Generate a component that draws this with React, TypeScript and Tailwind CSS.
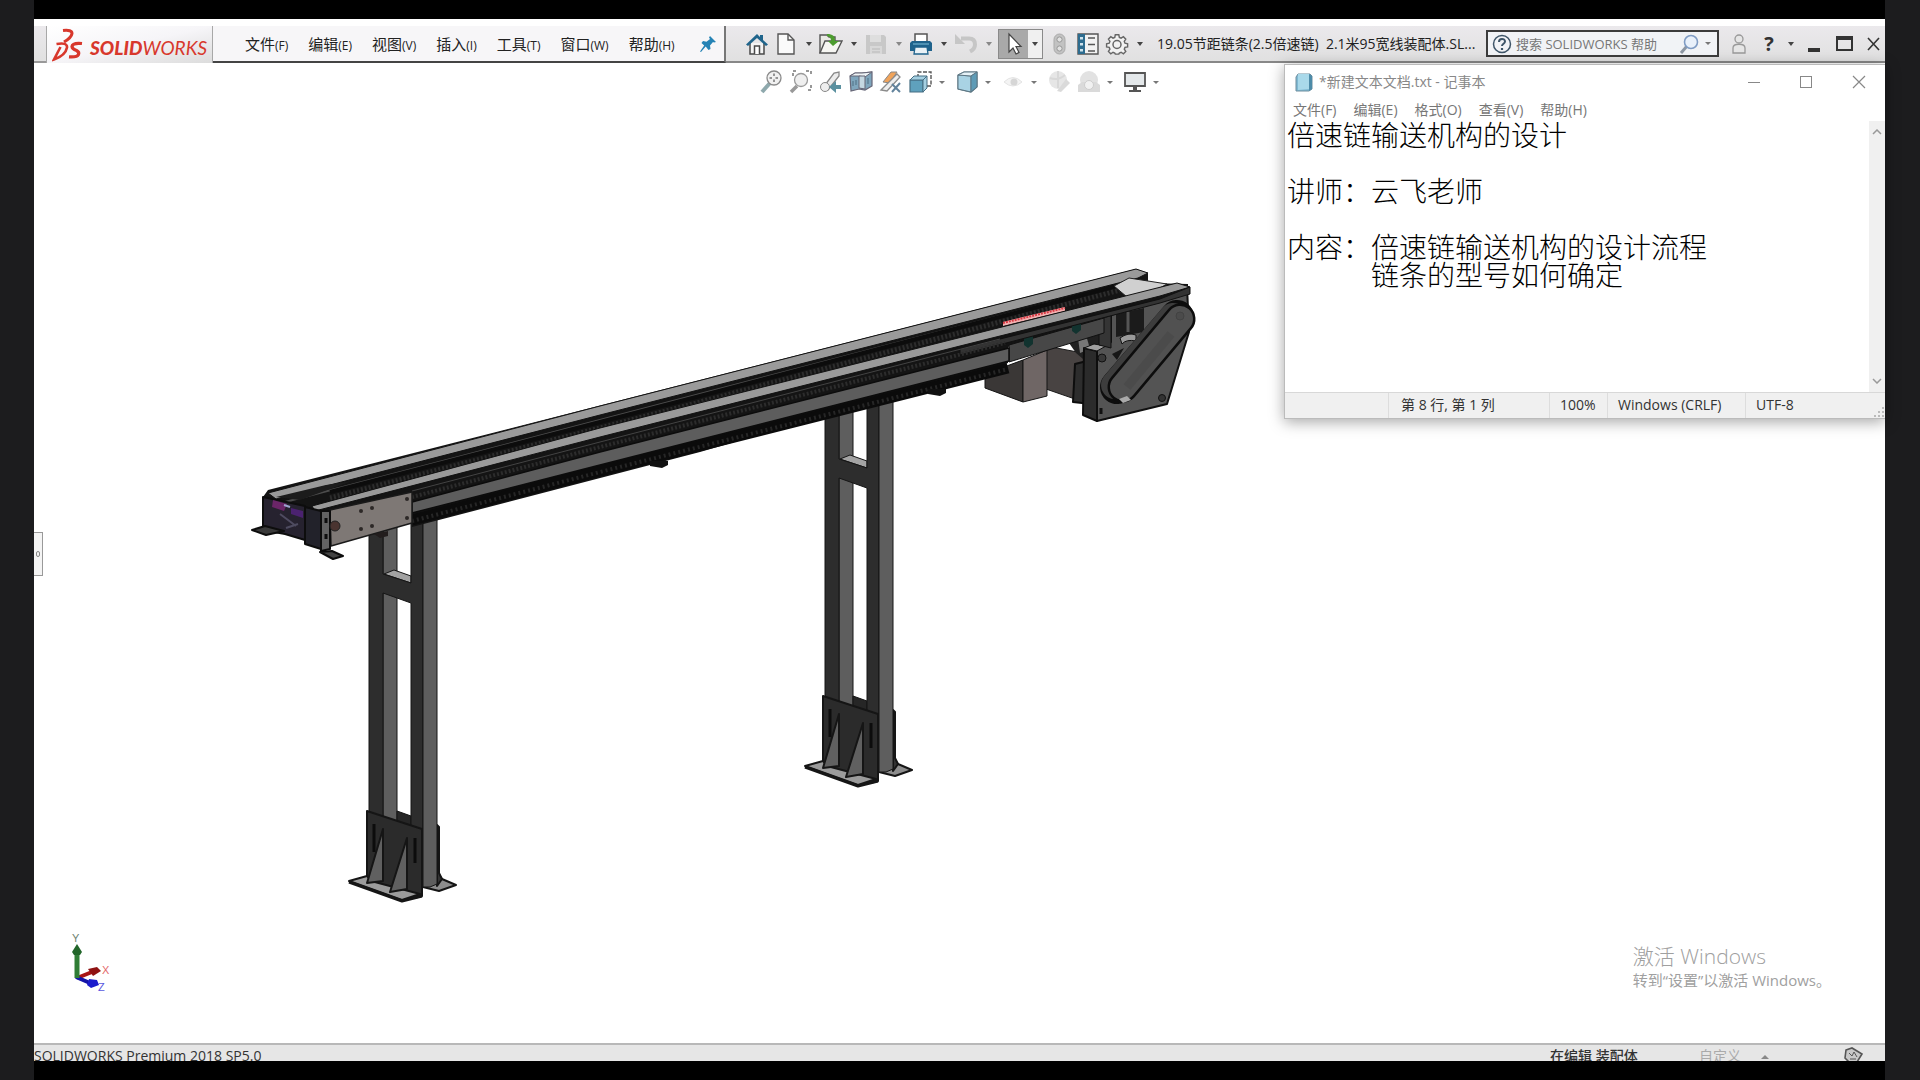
import { ReactNode } from "react";

const UI_FONT = "font-['Open_Sans','Noto_Sans_CJK_SC',sans-serif]";

const menus = [
  { label: "文件", key: "(F)" },
  { label: "编辑", key: "(E)" },
  { label: "视图", key: "(V)" },
  { label: "插入", key: "(I)" },
  { label: "工具", key: "(T)" },
  { label: "窗口", key: "(W)" },
  { label: "帮助", key: "(H)" },
];

const notepadMenus = ["文件(F)", "编辑(E)", "格式(O)", "查看(V)", "帮助(H)"];

const noteText = [
  "倍速链输送机构的设计",
  "",
  "讲师：云飞老师",
  "",
  "内容：倍速链输送机构的设计流程",
  "\u3000\u3000\u3000链条的型号如何确定",
].join("\n");

const Icon = ({ children, className = "" }: { children: ReactNode; className?: string }) => (
  <svg viewBox="0 0 24 24" fill="none" className={`h-6 w-6 shrink-0 ${className}`}>
    {children}
  </svg>
);

const IconButton = ({ label, children }: { label: string; children: ReactNode }) => (
  <button type="button" aria-label={label} className="flex w-[26px] shrink-0 items-center justify-center">
    {children}
  </button>
);

const Caret = ({ label, tone = "text-[#444]" }: { label: string; tone?: string }) => (
  <button type="button" aria-label={label} className={`flex w-[19px] shrink-0 items-center justify-center ${tone}`}>
    <svg viewBox="0 0 6 4" className="h-1 w-1.5" fill="currentColor">
      <path d="M0 0h6L3 4z" />
    </svg>
  </button>
);

const SmallCaret = ({ label }: { label: string }) => (
  <button type="button" aria-label={label} className="flex w-[18px] shrink-0 items-center justify-center text-[#777]">
    <svg viewBox="0 0 6 3" className="h-[3px] w-1.5" fill="currentColor">
      <path d="M0 0h6L3 3z" />
    </svg>
  </button>
);

const Logo = () => (
  <div className="flex w-[167px] shrink-0 items-center gap-[6px] border-x border-x-[#a8a8a8] bg-linear-to-br from-white via-[#f6f5f8] to-[#dcdcdc] pl-[5px]">
    <svg viewBox="0 0 32 34" className="h-[34px] w-8 shrink-0" fill="none" stroke="#d8382c">
      <path d="M11 2.5 Q20 1.500 20 5.500 Q19.500 9.500 12 14" strokeWidth="3" />
      <path d="M4.500 16 Q15.500 14 15 19.500 Q13.500 27.500 2 31.500 L8.500 19" strokeWidth="2.600" />
      <path d="M30 15.500 Q20.500 14.500 20 18.500 Q20.200 21 24.500 22.500 Q27.500 24 26.500 26.500 Q25 29.500 17 28.800" strokeWidth="3.200" />
    </svg>
    <span className="pt-1.5 font-[Lato,sans-serif] text-[19px] leading-6 text-[#d8382c] italic">
      <span className="font-black">SOLID</span>WORKS
    </span>
  </div>
);

const MenuBar = () => (
  <nav className="flex w-[513px] shrink-0 items-center gap-5 border-r-2 border-b-2 border-r-[#777] border-b-[#444] bg-[#f7f6f8] pl-8">
    {menus.map((m) => (
      <button key={m.label} type="button" className="shrink-0 text-[15px] leading-5 whitespace-nowrap text-[#222]">
        {m.label}
        <span className="text-xs">{m.key}</span>
      </button>
    ))}
    <button type="button" aria-label="固定" className="ml-1">
      <svg viewBox="0 0 18 18" className="h-[18px] w-[18px]">
        <path d="M11 1l6 6-2 .5-1-.5-3 3.500.5 3.500-2 1-2.800-3.500L2 17l-1-.5 4.200-6L2.500 8l1.500-2 3.500.8L11 4l-1-1.500z" fill="#2583b5" />
      </svg>
    </button>
  </nav>
);

const QuickTools = () => (
  <div className="flex shrink-0 items-center pl-[18px]">
    <IconButton label="主页">
      <Icon>
        <path d="M5 11v11h14V11" fill="#f4f4f4" stroke="#4a4a4a" strokeWidth="1.500" />
        <path d="M1 12.500 12 2l3 3V3h3v5l5 4.500-2 1.500-9-8-9 8z" fill="#20658c" />
        <path d="M9.500 22v-8h5v8" fill="#fff" stroke="#4a4a4a" strokeWidth="1.500" />
      </Icon>
    </IconButton>
    <div className="w-[3px]" />
    <IconButton label="新建">
      <Icon>
        <path d="M4 2h10l6 6v14H4z" fill="#fafafa" stroke="#555" strokeWidth="1.400" />
        <path d="M14 2v6h6" stroke="#555" strokeWidth="1.400" />
      </Icon>
    </IconButton>
    <Caret label="新建选项" />
    <IconButton label="打开">
      <Icon>
        <path d="M1 21V3h7l2 2h6v4" fill="#e9e9e4" stroke="#555" strokeWidth="1.400" />
        <path d="M1 21 6 9h17l-6 12z" fill="#f6f6f2" stroke="#555" strokeWidth="1.400" />
        <path d="M8 2c6 0 8 2 8 7h4l-6 5-5-5h3c0-3-1-4-4-5z" fill="#4c9c2e" />
      </Icon>
    </IconButton>
    <Caret label="打开选项" />
    <IconButton label="保存">
      <Icon>
        <path d="M2 3h18l2 2v17H2z" fill="#c8c8c8" />
        <path d="M6 3h11v7H6z" fill="#dedede" />
        <path d="M6 14h12v8H6z" fill="#d8d8d8" />
        <path d="M8 17h8M8 20h8" stroke="#b8b8b8" />
      </Icon>
    </IconButton>
    <Caret label="保存选项" tone="text-[#888]" />
    <IconButton label="打印">
      <Icon>
        <path d="M6 9V2h12v7" fill="#fff" stroke="#555" strokeWidth="1.500" />
        <path d="M3 9h18l2 2v8H1v-8z" fill="#1f638c" />
        <path d="M6 15h12l1 7H5z" fill="#eaf2f6" stroke="#1f638c" strokeWidth="1.300" />
        <path d="M4 12h16" stroke="#6fb0cf" strokeWidth="1.200" />
      </Icon>
    </IconButton>
    <Caret label="打印选项" />
    <IconButton label="撤销">
      <Icon>
        <path d="M7 6.500h8c5 0 6 3 6 6s-1 5-5 7" stroke="#c6c6c6" strokeWidth="4" />
        <path d="M1 2v10h10z" fill="#c6c6c6" />
      </Icon>
    </IconButton>
    <Caret label="撤销选项" tone="text-[#888]" />
    <div className="flex h-[30px] w-[45px] border border-[#8a8a8a]">
      <button type="button" aria-label="选择" className="flex w-[29px] items-center justify-center bg-[#a9a9a9]">
        <Icon>
          <path d="M7 2v18l4-4 3 6 3-1.500-3-6h5z" fill="#fff" stroke="#444" strokeWidth="1.200" />
        </Icon>
      </button>
      <div className="flex w-3.5 justify-center bg-[#f0f0f0]">
        <Caret label="选择选项" />
      </div>
    </div>
    <div className="flex gap-[3px] pl-[3px]">
      <IconButton label="重建模型">
        <Icon>
          <rect x="7" y="2" width="11" height="20" rx="5.500" fill="#c2c2c2" stroke="#aaa" />
          <circle cx="12.500" cy="7.500" r="2.600" fill="#e2e2e2" stroke="#999" />
          <circle cx="12.500" cy="16.500" r="2.600" fill="#e2e2e2" stroke="#999" />
        </Icon>
      </IconButton>
      <IconButton label="文件属性">
        <Icon>
          <path d="M2 2h20v20H2z" fill="#f2f2f2" stroke="#555" strokeWidth="1.400" />
          <path d="M2 2h7v20H2z" fill="#2d6c8f" />
          <path d="M4 5h3v2.500H4zM4 11h3v2.500H4zM4 17h3v2.500H4z" fill="#cfe3ec" />
          <path d="M12 6h7M12 12.500h7M12 19h7" stroke="#555" strokeWidth="1.600" />
        </Icon>
      </IconButton>
      <IconButton label="选项">
        <Icon>
          <path
            d="M10 2h4l.6 3 2 .9 2.600-1.700 2.700 2.800-1.700 2.600.8 2 3 .6v3.600l-3 .6-.8 2 1.700 2.500-2.700 2.700-2.600-1.700-2 .8-.6 1.300h-4l-.6-1.300-2-.8-2.500 1.700-2.700-2.700 1.700-2.500-.8-2-3-.6v-3.600l3-.6.8-2L2.200 7l2.700-2.800 2.500 1.700 2-.9z"
            transform="translate(1.500 1) scale(.88)"
            fill="#f2f2f2"
            stroke="#666"
            strokeWidth="1.600"
          />
          <circle cx="12" cy="12.500" r="4" stroke="#666" strokeWidth="1.500" />
        </Icon>
      </IconButton>
    </div>
    <Caret label="更多选项" />
  </div>
);

const SearchBox = () => (
  <label className="flex h-[27px] w-[233px] shrink-0 items-center border-2 border-[#3c3c3c] bg-[#f1f3f6] pl-1">
    <svg viewBox="0 0 20 20" className="h-5 w-5 shrink-0" fill="none" stroke="#3e5568" strokeWidth="1.500">
      <circle cx="10" cy="10" r="8.500" />
      <path d="M7 8c0-4 6-4 6-.5 0 2.200-3 2.300-3 4.500" strokeWidth="2" />
      <path d="M10 14v2" strokeWidth="2.200" />
    </svg>
    <input
      type="search"
      aria-label="搜索帮助"
      placeholder="搜索 SOLIDWORKS 帮助"
      className="ml-1 min-w-0 flex-1 bg-transparent text-[13px] leading-5 outline-none placeholder:text-[#777]"
    />
    <svg viewBox="0 0 20 20" className="h-5 w-5 shrink-0" fill="none">
      <path d="M8 12 2 19" stroke="#8d97a3" strokeWidth="3" />
      <circle cx="12" cy="8" r="6.500" fill="#e9f1fb" stroke="#7f9cc4" strokeWidth="1.600" />
    </svg>
    <SmallCaret label="搜索选项" />
  </label>
);

const WindowTools = () => (
  <div className="flex shrink-0 items-center pl-3">
    <button type="button" aria-label="登录">
      <svg viewBox="0 0 16 22" className="h-[22px] w-4" fill="#e6e6e6" stroke="#999" strokeWidth="1.300">
        <circle cx="8" cy="6" r="4" />
        <path d="M2 20v-5c0-5 12-5 12 0v5z" />
      </svg>
    </button>
    <button type="button" className="ml-3.5 w-4 text-xl leading-6 font-bold text-[#333]">
      ?
    </button>
    <div className="ml-1 flex">
      <Caret label="帮助选项" />
    </div>
    <button type="button" aria-label="最小化" className="ml-2 flex h-5 w-4 items-end pb-0.5">
      <span className="h-1 w-3 bg-[#333]" />
    </button>
    <button type="button" aria-label="最大化" className="ml-3 h-[15px] w-[17px] border-2 border-t-4 border-[#333]" />
    <button type="button" aria-label="关闭" className="mr-1 ml-3">
      <svg viewBox="0 0 16 16" className="h-4 w-4" stroke="#333" strokeWidth="1.600">
        <path d="M3 2l11 12M14 2 3 14" />
      </svg>
    </button>
  </div>
);

const ViewTools = () => (
  <div className="relative flex justify-center pt-[7px] pl-1">
    <div className="flex gap-1">
      <div className="flex">
        <div className="flex gap-1.5">
          <button type="button" aria-label="整屏显示全图">
            <Icon>
              <path d="M11 13 3 22" stroke="#8fa9ad" strokeWidth="4" />
              <circle cx="15" cy="8" r="7" fill="#f1f1f1" stroke="#8a8a8a" strokeWidth="1.300" />
              <path d="M15 3.500v9M10.500 8h9" stroke="#777" strokeWidth="1.500" strokeDasharray="2.500 3.500" />
            </Icon>
          </button>
          <button type="button" aria-label="局部放大">
            <Icon>
              <path d="M8 16 2 22" stroke="#999" strokeWidth="3.500" />
              <circle cx="12" cy="10" r="6.500" fill="#efefef" stroke="#9a9a9a" strokeWidth="1.300" />
              <path d="M4 6V1h5M17 1h5v5M22 15v5h-5" stroke="#777" strokeWidth="1.500" strokeDasharray="3 2" />
            </Icon>
          </button>
          <button type="button" aria-label="上一视图">
            <Icon>
              <path d="M3 19 15 3l5-1v4L9 20z" fill="#ececec" stroke="#888" strokeWidth="1.300" />
              <circle cx="6" cy="17" r="4.500" fill="#eee" stroke="#888" />
              <path d="M17 11l-7 6 7 6v-4h5v-4h-5z" fill="#5b91a0" />
            </Icon>
          </button>
          <button type="button" aria-label="剖面视图">
            <Icon>
              <path d="M1 6 6 3h7l10-1v14l-7 4-6-1-8 2z" fill="#7fa6bd" stroke="#667" strokeWidth="1.200" />
              <path d="M1 6 6 3h7l10-1-7 5-6-1z" fill="#eef3f5" stroke="#667" />
              <path d="M10 6h6v13l-6-1z" fill="#c5d8e2" stroke="#667" />
              <path d="M4 11v5M7 10v5M19 8v6" stroke="#4f6f83" />
            </Icon>
          </button>
          <button type="button" aria-label="动态注解视图">
            <Icon>
              <path d="M4 12 12 2h6l-7 11z" fill="#f0a35a" stroke="#888" />
              <path d="M2 20 18 4l3 3L8 21z" fill="#eee" stroke="#8b8b8b" strokeWidth="1.300" />
              <path d="M13 14l8 8M21 13l-8 9" stroke="#62839c" strokeWidth="2" />
            </Icon>
          </button>
          <button type="button" aria-label="视图定向">
            <Icon>
              <path d="M9 8V2h13v14h-5" fill="#fff" stroke="#555" strokeWidth="1.400" strokeDasharray="4 1.500" />
              <path d="M1 10h13v12H1z" fill="#5fa1bd" stroke="#466f83" strokeWidth="1.200" />
              <path d="M1 10 5 6h13l-4 4zM18 6v12l-4 4V10z" fill="#a5d0e2" stroke="#466f83" />
            </Icon>
          </button>
        </div>
        <SmallCaret label="视图定向选项" />
      </div>
      <div className="flex">
        <button type="button" aria-label="显示样式">
          <Icon>
            <path d="M3 5 9 2h13v15l-6 5-13-3z" fill="#8fc0d6" stroke="#5d7683" strokeWidth="1.200" />
            <path d="M3 5l13 1v16L3 19z" fill="#a9d3e4" stroke="#5d7683" />
            <path d="M3 5l6-3h13l-6 4z" fill="#e6f2f7" stroke="#5d7683" />
            <path d="M16 6l6-4v15l-6 5z" fill="#5e9bb6" stroke="#5d7683" />
          </Icon>
        </button>
        <SmallCaret label="显示样式选项" />
      </div>
      <div className="flex">
        <button type="button" aria-label="隐藏项目">
          <Icon>
            <path d="M3 12q9-9 18 0-9 8-18 0z" fill="#f4f4f4" stroke="#e4e4e4" />
            <circle cx="13" cy="12" r="3.500" fill="#d6d6d6" />
          </Icon>
        </button>
        <SmallCaret label="隐藏项目选项" />
      </div>
      <div className="flex">
        <div className="flex gap-1.5">
          <button type="button" aria-label="编辑外观">
            <Icon>
              <circle cx="11" cy="10" r="9" fill="#e6e6e6" />
              <path d="M3 8q8 3 15-3M11 1v17" stroke="#d8d8d8" strokeWidth="2" />
              <path d="M10 21 19 9l4 4-9 9z" fill="#dadada" />
            </Icon>
          </button>
          <button type="button" aria-label="应用布景">
            <Icon>
              <circle cx="12" cy="10" r="9" fill="#e2e2e2" />
              <path d="M1 22v-7l4-3h14l4 3v7z" fill="#dadada" />
              <circle cx="12" cy="15" r="4.500" fill="#f1f1f1" stroke="#cdcdcd" />
            </Icon>
          </button>
        </div>
        <SmallCaret label="应用布景选项" />
      </div>
      <div className="flex">
        <button type="button" aria-label="视图设定">
          <Icon>
            <path d="M2 3h20v13H2z" fill="#e4e8ea" stroke="#555" strokeWidth="1.800" />
            <path d="M10 16h4v4h4v2H6v-2h4z" fill="#555" />
          </Icon>
        </button>
        <SmallCaret label="视图设定选项" />
      </div>
    </div>
  </div>
);

// one support frame: two square tubes, a cross tube and the foot plates
const Leg = ({ x, y }: { x: number; y: number }) => (
  <g transform={`translate(${x} ${y})`} stroke="#151515" strokeLinejoin="round">
    <path d="M383 500h14v330h-14z" fill="#5e5e5e" strokeWidth="1" />
    <path d="M397 811l14 5v12h-14z" fill="#262626" />
    <path d="M384 574l10-4 17 6v7z" fill="#a3a3a3" />
    <path d="M369 500h14v74l28 9v-83h12v385h-12V603l-28-10v230h-14z" fill="#2d2d2d" strokeWidth="1" />
    <path d="M438 874l4 5 14 6-17 6-16-4z" fill="#8d8d8d" strokeWidth="2" />
    <path d="M437 825l2 2v46l3 6-5 7z" fill="#333" strokeWidth="2" />
    <path d="M423 500h14v384l-7 3h-7z" fill="#5e5e5e" strokeWidth="1" />
    <path d="M367 811l55 18v67l-8 2-40-14-7-6z" fill="#2b2b2b" strokeWidth="2" />
    <path d="M349 881l18-5 4 5 49 13-18 6z" fill="#9b9b9b" strokeWidth="2" />
    <path d="M349 882l53 19 20-5" fill="none" strokeWidth="3" />
    <path d="M383 829v52l-16 2z" fill="#606060" strokeWidth="2" />
    <path d="M407 838v51l-17 3z" fill="#606060" strokeWidth="2" />
    <path d="M374 824v28M415 838v25" strokeWidth="3" fill="none" stroke="#0c0c0c" />
  </g>
);

const Conveyor = () => (
  <svg
    viewBox="34 63 1851 980"
    preserveAspectRatio="xMinYMin meet"
    className="absolute inset-0 h-full w-full"
    role="img"
    aria-label="倍速链输送机"
    strokeLinejoin="round"
  >
    <Leg x={0} y={0} />
    <Leg x={456} y={-115} />

    {/* drive box and motor */}
    <path d="M985 374l38-14v42l-38-14z" fill="#3a3736" stroke="#151515" />
    <path d="M1046 346l42 8-4 48-12-4-26-9z" fill="#484342" stroke="#1a1a1a" />
    <path d="M1023 360l24-10v46l-24 6z" fill="#6f6665" stroke="#151515" />
    <path d="M1075 364l16-4v44l-18-2z" fill="#2d2d2d" stroke="#0d0d0d" strokeWidth="2" />
    <path d="M1060 330l60-20 20 30-50 25-14-12z" fill="#202020" />
    <path d="M1078 338l8-3 4 14-10 4z" fill="#777" />

    {/* gearbox plate */}
    <path d="M1111 312l76-26 2 46-22 72-70 17V348l14-6z" fill="#545454" stroke="#111" strokeWidth="2" />
    <path d="M1084 348l13 3v70l-14-6z" fill="#2b2b2b" stroke="#0d0d0d" strokeWidth="2" />
    <path d="M1084 348l10-4 12 2-9 5z" fill="#a0a0a0" stroke="#111" />
    <path d="M1099 312l12-4v40l-12-3z" fill="#353535" stroke="#111" />
    <path d="M1116 314l28-6v24l-28 5z" fill="#1b1b1b" />
    <path d="M1128 312v20" stroke="#555" strokeWidth="3" />
    <path d="M1120 338q8-6 16-3v6q-10-2-14 3z" fill="#9a9a9a" stroke="#111" />
    <path d="M1112 354l12-6-7 12z" fill="#161616" />
    <circle cx="1102" cy="358" r="4" fill="#383838" stroke="#111" />
    <circle cx="1162" cy="398" r="3.500" fill="#333" stroke="#111" />
    <path d="M1101 408v6" stroke="#111" strokeWidth="3" />
    <path d="M1117 387l60-70" stroke="#0d0d0d" strokeWidth="34" strokeLinecap="round" />
    <path d="M1115 385l58-68" stroke="#3d3d3d" strokeWidth="28" strokeLinecap="round" />
    <path d="M1123 387l57-68" stroke="#0d0d0d" strokeWidth="31" strokeLinecap="round" />
    <path d="M1123 387l57-68" stroke="#515151" strokeWidth="26" strokeLinecap="round" />
    <path d="M1127 387l44-53" stroke="#4b4b4b" strokeWidth="9" />
    <circle cx="1180" cy="316" r="4" fill="#4b4b4b" stroke="#424242" />
    <path d="M1119 399l8-3 4 4-8 3z" fill="#aaa" />

    {/* dark body of both rails */}
    <path d="M263 497l5-7 868-221 12 4v10l40 1v9l-60 18-120 36v16L700 452 412 527v-20l-80 28-70-5z" fill="#141414" />
    <path d="M1009 345l95-27v15l-95 29z" fill="#474747" stroke="#111" />
    <path d="M1024 336l9-2v10l-5 4-4-3zM1072 323l9-2v9l-5 4-4-3z" fill="#12332f" />

    {/* far rail */}
    <path d="M268 493L600 406 1136 269l12 4-10 5L600 415 276 499z" fill="#9a9a9a" stroke="#111" />
    <path d="M285 502L600 420l530-138" stroke="#4c4c4c" strokeWidth="2" fill="none" />
    <path d="M330 498L700 402l420-112" stroke="#2c2c2c" strokeWidth="5" strokeDasharray="2 2" fill="none" />
    <path d="M330 492L700 396l420-111" stroke="#0c0c0c" strokeWidth="4" fill="none" />
    <path d="M1114 286l15-8 38 6-16 9-24 4z" fill="#d0d0d0" stroke="#222" />
    <path d="M1003 322l62-15v4l-62 15z" fill="#f2b0b0" />
    <path d="M1003 323l62-15" stroke="#d93a44" strokeWidth="2" strokeDasharray="2 1" />

    {/* near rail */}
    <path d="M312 506L600 428l577-145 13 4-30 9-200 50-360 91-285 74z" fill="#9a9a9a" stroke="#111" />
    <path d="M1190 287v7l-30 9-200 52v-6l200-50z" fill="#333" stroke="#111" />
    <path d="M412 491L600 442l400-103" stroke="#444" strokeWidth="1" fill="none" />
    <path d="M412 497L600 447l405-104" stroke="#2c2c2c" strokeWidth="4" strokeDasharray="2 2" fill="none" />
    <path d="M412 502L600 452l409-104v13L600 465 412 513z" fill="#5d5d5d" stroke="#0c0c0c" strokeWidth="1.500" />
    <path d="M412 520L600 471l408-103" stroke="#0b0b0b" strokeWidth="11" fill="none" />
    <path d="M412 521L600 472l408-103" stroke="#262626" strokeWidth="4" strokeDasharray="2 3" fill="none" />
    <path d="M650 461h18v4l-6 3-12-2zM928 389h18v4l-6 3-12-2z" fill="#111" />

    {/* tail end */}
    <path d="M263 497l42 9v34l-20-6-22-4z" fill="#26222f" stroke="#0d0d0d" strokeWidth="2" />
    <path d="M300 500l-24-3 50-12 26-4z" fill="#1c1c1c" />
    <path d="M273 500l14 4-3 7-12-4z" fill="#6b2568" />
    <path d="M291 508l12 3v7l-12-4z" fill="#4b2270" />
    <path d="M284 505l6 2" stroke="#9ea4d0" strokeWidth="2" />
    <path d="M280 514l16 12M286 528l12-4" stroke="#4e4b60" strokeWidth="2" />
    <path d="M252 530l13-4 19 5-18 4z" fill="#3a3a3a" stroke="#0d0d0d" strokeWidth="2" />
    <path d="M305 507l16 4v38l-16-5z" fill="#22222a" stroke="#0d0d0d" strokeWidth="2" />
    <path d="M330 510l82-18v31l-81 23z" fill="#7e7875" stroke="#1a1a1a" strokeWidth="1.500" />
    <path d="M321 511h9v38l-9 2z" fill="#636363" stroke="#0d0d0d" strokeWidth="2" />
    <path d="M326 518v5M326 534v5" stroke="#0d0d0d" strokeWidth="3" />
    <path d="M320 552l12-1 11 5-10 3z" fill="#444" stroke="#0d0d0d" strokeWidth="2" />
    <circle cx="335" cy="526" r="5" fill="#4a3430" stroke="#222" />
    <g fill="#2c2826">
      <circle cx="361" cy="511" r="2" />
      <circle cx="372" cy="508" r="2" />
      <circle cx="361" cy="529" r="2" />
      <circle cx="372" cy="526" r="2" />
      <circle cx="407" cy="499" r="2" />
      <circle cx="407" cy="518" r="2" />
    </g>
    <path d="M374 534l14-3v5l-8 2z" fill="#221d1d" />
  </svg>
);

const Triad = () => (
  <svg viewBox="0 0 50 66" className="absolute bottom-12 left-8 h-[66px] w-[50px] font-['Liberation_Sans',sans-serif]" fontSize="11">
    <path d="M11 49 26 43" stroke="#a81414" strokeWidth="4" />
    <path d="M22 40l9-2 4 4-8 5z" fill="#8f1212" />
    <path d="M10 48l14 6" stroke="#1414a8" strokeWidth="4" />
    <path d="M23 50l8 1 2 5-8 3-4-3z" fill="#1c1ccc" />
    <path d="M11 49V24" stroke="#2f7d35" strokeWidth="5" />
    <path d="M11 15l5 8-2 3H8l-2-3z" fill="#22662a" />
    <text x="6" y="13" fill="#6f7f70">Y</text>
    <text x="36" y="45" fill="#e46a6a">X</text>
    <text x="32" y="62" fill="#5a5ae0">Z</text>
  </svg>
);

const Notepad = () => (
  <section className="absolute top-px right-0 flex h-[355px] w-[601px] flex-col border border-r-0 border-[#bbb] bg-white shadow-[0_3px_14px_rgba(0,0,0,0.35)]">
    <header className="flex h-[34px] shrink-0 items-center pr-[19px] pl-2.5 text-[#888]">
      <svg viewBox="0 0 18 20" className="h-5 w-[18px]">
        <path d="M3 2h12l2 2v13l-3 2H1V5z" fill="#7fb9d3" stroke="#6f8e9e" />
        <path d="M3 2h11v15l-11 1z" fill="#a9d9ea" />
        <path d="M14 2l3 2v13l-3 2z" fill="#4d8ba8" />
      </svg>
      <h1 className="ml-1.5 text-sm leading-5">*新建文本文档.txt - 记事本</h1>
      <div className="ml-auto flex items-center gap-10">
        <button type="button" aria-label="最小化" className="h-px w-3 bg-[#888]" />
        <button type="button" aria-label="最大化" className="h-3 w-3 border border-[#888]" />
        <button type="button" aria-label="关闭">
          <svg viewBox="0 0 14 14" className="h-3.5 w-3.5" stroke="#888" strokeWidth="1.200">
            <path d="M1 1l12 12M13 1 1 13" />
          </svg>
        </button>
      </div>
    </header>
    <nav className="flex h-[22px] shrink-0 items-center gap-[17px] pl-2 text-[#777]">
      {notepadMenus.map((m) => (
        <button key={m} type="button" className="text-sm leading-5 whitespace-nowrap">
          {m}
        </button>
      ))}
    </nav>
    <div className="flex min-h-0 flex-1">
      <textarea
        aria-label="文本编辑器"
        spellCheck={false}
        defaultValue={noteText}
        className="-mt-1 min-w-0 flex-1 resize-none overflow-hidden bg-transparent pt-[3px] pl-0.5 font-['Noto_Sans_CJK_SC',sans-serif] text-[28px] leading-7 font-light text-black outline-none"
      />
      <div className="flex w-4 flex-col items-center justify-between bg-[#f0f0f0] py-2">
        <svg viewBox="0 0 10 6" className="h-1.5 w-2.5" fill="none" stroke="#999" strokeWidth="1.500">
          <path d="M1 5l4-4 4 4" />
        </svg>
        <svg viewBox="0 0 10 6" className="h-1.5 w-2.5" fill="none" stroke="#999" strokeWidth="1.500">
          <path d="M1 1l4 4 4-4" />
        </svg>
      </div>
    </div>
    <footer className="flex h-[26px] shrink-0 items-stretch border-t border-[#d8d8d8] bg-[#f0f0f0] text-sm leading-6 text-[#333]">
      <span className="w-[103px]" />
      <span className="w-[161px] border-l border-[#ddd] pl-3">第 8 行, 第 1 列</span>
      <span className="w-[58px] border-l border-[#ddd] pl-2.5">100%</span>
      <span className="w-[138px] border-l border-[#ddd] pl-2.5">Windows (CRLF)</span>
      <span className="flex-1 border-l border-[#ddd] pl-2.5">UTF-8</span>
      <svg viewBox="0 0 12 12" className="h-3 w-3 self-end" fill="#bbb">
        <path d="M9 1h2v2H9zM5 5h2v2H5zM9 5h2v2H9zM1 9h2v2H1zM5 9h2v2H5zM9 9h2v2H9z" />
      </svg>
    </footer>
  </section>
);

const StatusBar = () => (
  <footer className="flex h-[18px] shrink-0 items-start overflow-hidden border-t-2 border-[#b8b8b8] bg-[#e6e6e6] text-sm leading-[22px] text-[#333]">
    <span>SOLIDWORKS Premium 2018 SP5.0</span>
    <span className="ml-auto w-[149px] font-medium">在编辑 装配体</span>
    <span className="text-[#aaa]">自定义</span>
    <svg viewBox="0 0 8 4" className="mt-2.5 ml-5 h-1 w-2" fill="#888">
      <path d="M0 4 4 0l4 4z" />
    </svg>
    <svg viewBox="0 0 22 18" className="mt-0.5 mr-5 ml-[74px] h-[18px] w-[22px]" fill="#c9c9c9" stroke="#555" strokeWidth="1.600">
      <path d="M3 3 9 1l10 6-5 8-7 1-5-5z" />
      <path d="M6 6l3 3 2-4 3 5M7 12h6" fill="none" strokeWidth="1" />
    </svg>
  </footer>
);

export default function App() {
  return (
    <div className={`flex h-screen overflow-hidden bg-[#1c1c1e] pr-[35px] pl-[34px] ${UI_FONT}`}>
      <div className="flex min-w-0 flex-1 flex-col bg-black py-[19px]">
        <header className="flex h-11 shrink-0 border-t-[7px] border-t-white bg-linear-to-b from-[#ebe9ec] to-[#e0e0e0]">
          <div className="w-3 shrink-0 border-b-2 border-[#999]" />
          <Logo />
          <MenuBar />
          <div className="flex min-w-0 flex-1 items-center border-b-2 border-[#888]">
            <QuickTools />
            <p className="min-w-0 flex-1 overflow-hidden pl-2 text-sm leading-5 whitespace-pre text-[#222]">
              19.05节距链条(2.5倍速链)  2.1米95宽线装配体.SL...
            </p>
            <SearchBox />
            <WindowTools />
          </div>
        </header>

        <main className="relative min-h-0 flex-1 bg-white">
          <Conveyor />
          <ViewTools />
          <button
            type="button"
            aria-label="展开设计树"
            className="absolute top-[469px] left-0 flex h-11 w-[9px] items-center justify-center border border-l-0 border-[#999] bg-[#f4f4f4]"
          >
            <span className="h-1.5 w-1 rounded-full border border-[#888]" />
          </button>
          <Triad />
          <div className="absolute right-[54px] bottom-[53px] text-[#a0a0a0]">
            <p className="text-[21px] leading-7 font-light">激活 Windows</p>
            <p className="text-[15px] leading-5">转到“设置”以激活 Windows。</p>
          </div>
          <Notepad />
        </main>

        <StatusBar />
      </div>
    </div>
  );
}
